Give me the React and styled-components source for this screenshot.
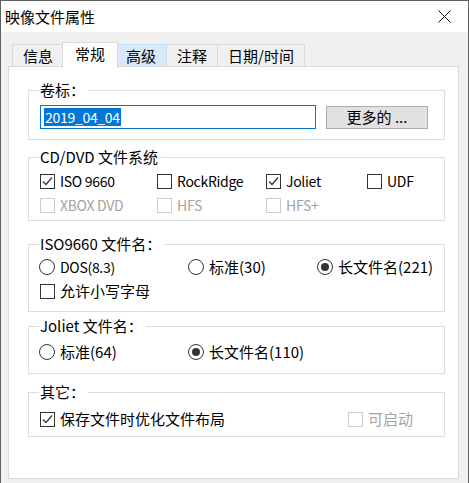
import React from 'react';
import styled, { createGlobalStyle } from 'styled-components';

const GlobalStyle = createGlobalStyle`
  html, body {
    margin: 0;
    padding: 0;
    background: #ffffff;
  }
  * {
    box-sizing: border-box;
  }
`

const Window = styled.div`
  width: 469px;
  height: 483px;
  display: flex;
  flex-direction: column;
  background: #f0f0f0;
  border: 1px solid #5f5f5f;
  border-bottom: none;
  font-family: "Noto Sans CJK SC", "Noto Sans", sans-serif;
  font-size: 15px;
  color: #000;
  overflow: hidden;
`

const TitleBar = styled.div`
  height: 31px;
  background: #ffffff;
  display: flex;
  align-items: center;
  justify-content: space-between;
  padding: 0 0 0 4px;
`

const Title = styled.div`
  line-height: 16px;
  margin-top: 1px;
`

const CloseButton = styled.div`
  width: 46px;
  height: 31px;
  display: flex;
  align-items: center;
  justify-content: center;
  margin-right: 1px;
`

const Body = styled.div`
  flex: 1;
  display: flex;
  flex-direction: column;
  padding: 10px 9px 4px 7px;
`

const TabStrip = styled.div`
  display: flex;
  align-items: flex-end;
  height: 25px;
  padding-left: 4px;
  position: relative;
  z-index: 1;
`

const Tab = styled.div`
  height: ${p => p.$active ? '26px' : '23px'};
  padding: 0 ${p => p.$active ? '12px' : '10px'};
  margin: 0 ${p => p.$active ? '-2px' : '0'} ${p => p.$active ? '-1px' : '0'};
  line-height: 22px;
  background: ${p => p.$active ? '#ffffff' : p.$hover ? '#d8eaf9' : '#f0f0f0'};
  border: 1px solid ${p => p.$hover ? '#c5dff5' : '#d9d9d9'};
  border-bottom: ${p => p.$active ? 'none' : '1px solid #d9d9d9'};
  border-left: ${p => p.$first || p.$active ? '1px solid #d9d9d9' : 'none'};
  position: relative;
  z-index: ${p => p.$active ? 2 : 1};
  white-space: nowrap;
`

const Panel = styled.div`
  flex: 1;
  background: #ffffff;
  border: 1px solid #d9d9d9;
  margin-top: -1px;
  padding: 15px 13px 0 19px;
  display: flex;
  flex-direction: column;
`

const Group = styled.fieldset`
  margin: ${p => p.$mt}px 0 0;
  padding: ${p => p.$pt}px 10px ${p => p.$pb}px 11px;
  border: 1px solid #dcdcdc;
  min-width: 0;
`

const Legend = styled.legend`
  padding: 0 3px 0 1px;
  margin-left: -1px;
  line-height: 16px;
  font-size: 15px;
`

const Row = styled.div`
  display: ${p => p.$cols ? 'grid' : 'flex'};
  grid-template-columns: ${p => p.$cols || 'none'};
  align-items: center;
  column-gap: 10px;
  row-gap: 0;
`

const Latin = styled.span`
  font-size: 14px;
  letter-spacing: -0.3px;
`

const TextInput = styled.div`
  width: 276px;
  height: 24px;
  border: 1px solid #0078d7;
  background: #fff;
  display: flex;
  align-items: center;
  padding-left: 3px;
`

const Selected = styled.span`
  background: #0078d7;
  color: #fff;
  font-size: 14px;
  letter-spacing: -0.3px;
  line-height: 18px;
  padding: 0 1px;
`

const Button = styled.div`
  width: 102px;
  height: 23px;
  background: #e1e1e1;
  border: 1px solid #adadad;
  display: flex;
  align-items: center;
  justify-content: center;
  line-height: 18px;
`

const Option = styled.div`
  height: 24px;
  display: flex;
  align-items: center;
  gap: 5px;
  white-space: nowrap;
  color: ${p => p.$disabled ? '#a3a3a3' : '#000'};
  line-height: 18px;
`

const Box = styled.span`
  width: 15px;
  height: 15px;
  flex: none;
  border: 1px solid ${p => p.$disabled ? '#cccccc' : '#333333'};
  background: #fff;
  display: flex;
  align-items: center;
  justify-content: center;
`

const Circle = styled.span`
  width: 16px;
  height: 16px;
  flex: none;
  border-radius: 50%;
  border: 1px solid #333333;
  background: #fff;
  display: flex;
  align-items: center;
  justify-content: center;
  margin-left: -1px;
  &::after {
    content: '';
    display: ${p => p.$on ? 'block' : 'none'};
    width: 8px;
    height: 8px;
    border-radius: 50%;
    background: #333333;
  }
`

const Check = ({ checked, disabled, children }) => (
  <Option $disabled={disabled}>
    <Box $disabled={disabled}>
      {checked && (
        <svg width="13" height="13" viewBox="0 0 13 13">
          <path d="M2 6.5 L5 9.5 L11 2.5" fill="none" stroke="#333" strokeWidth="1.2" />
        </svg>
      )}
    </Box>
    {children}
  </Option>
)

const Radio = ({ on, children }) => (
  <Option>
    <Circle $on={on} />
    {children}
  </Option>
)

export default function App() {
  return (
    <>
      <GlobalStyle />
      <Window>
        <TitleBar>
          <Title>映像文件属性</Title>
          <CloseButton>
            <svg width="13" height="13" viewBox="0 0 13 13">
              <path d="M0.5 0.5 L12.5 12.5 M12.5 0.5 L0.5 12.5" stroke="#111" strokeWidth="1" />
            </svg>
          </CloseButton>
        </TitleBar>
        <Body>
          <TabStrip>
            <Tab $first>信息</Tab>
            <Tab $active>常规</Tab>
            <Tab $hover>高级</Tab>
            <Tab>注释</Tab>
            <Tab>日期/时间</Tab>
          </TabStrip>
          <Panel>
            <Group $mt={0} $pt={7} $pb={10}>
              <Legend>卷标：</Legend>
              <Row>
                <TextInput><Selected>2019_04_04</Selected></TextInput>
                <Button>更多的 ...</Button>
              </Row>
            </Group>

            <Group $mt={9} $pt={4} $pb={3}>
              <Legend>CD/DVD 文件系统</Legend>
              <Row $cols="107px 99px 91px auto">
                <Check checked><Latin>ISO 9660</Latin></Check>
                <Check><Latin>RockRidge</Latin></Check>
                <Check checked><Latin>Joliet</Latin></Check>
                <Check><Latin>UDF</Latin></Check>
                <Check disabled><Latin>XBOX DVD</Latin></Check>
                <Check disabled><Latin>HFS</Latin></Check>
                <Check disabled><Latin>HFS+</Latin></Check>
              </Row>
            </Group>

            <Group $mt={15} $pt={3} $pb={8}>
              <Legend>ISO9660 文件名：</Legend>
              <Row $cols="139px 119px auto">
                <Radio><Latin>DOS(8.3)</Latin></Radio>
                <Radio>标准(30)</Radio>
                <Radio on>长文件名(221)</Radio>
              </Row>
              <Check>允许小写字母</Check>
            </Group>

            <Group $mt={6} $pt={6} $pb={9}>
              <Legend>Joliet 文件名：</Legend>
              <Row $cols="139px auto">
                <Radio>标准(64)</Radio>
                <Radio on>长文件名(110)</Radio>
              </Row>
            </Group>

            <Group $mt={10} $pt={7} $pb={5}>
              <Legend>其它：</Legend>
              <Row $cols="298px auto">
                <Check checked>保存文件时优化文件布局</Check>
                <Check disabled>可启动</Check>
              </Row>
            </Group>
          </Panel>
        </Body>
      </Window>
    </>
  );
}
